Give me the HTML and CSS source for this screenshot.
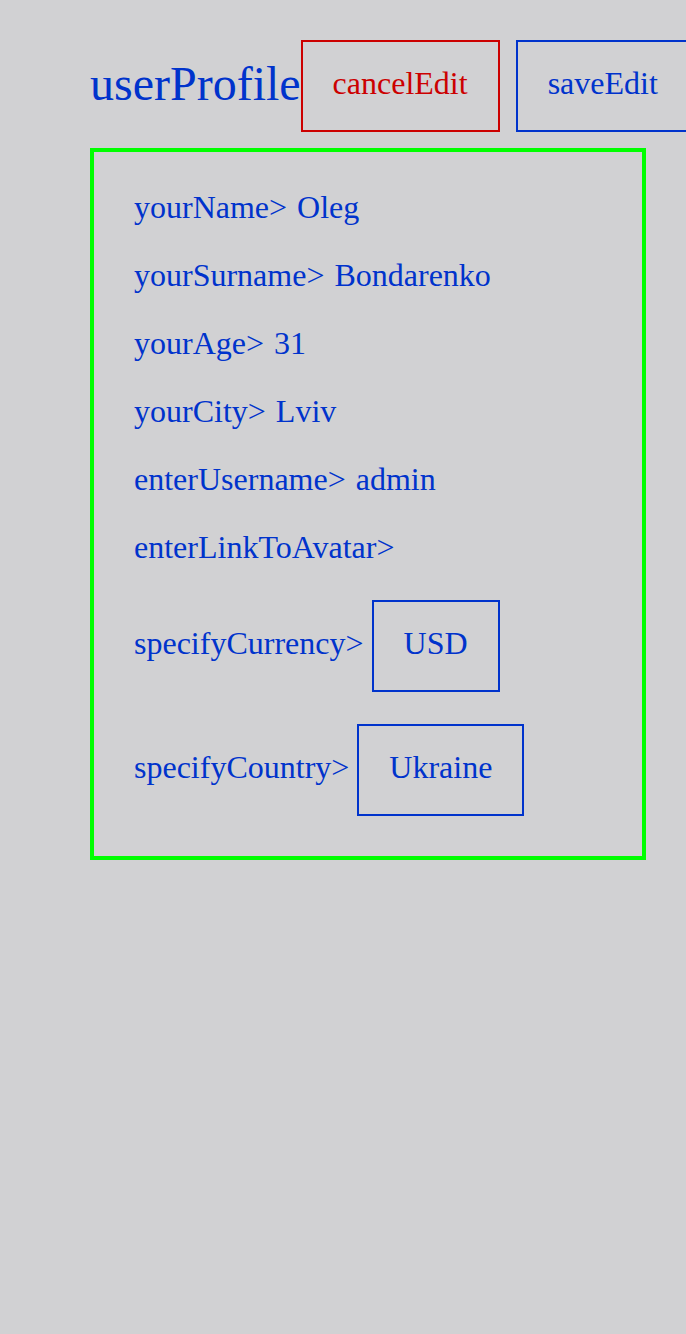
FILE: index.html
```html
<!DOCTYPE html>
<html>
<head>
<meta charset="utf-8">
<title>userProfile</title>
<link rel="stylesheet" href="styles.css">
</head>
<body>
<div class="page">
  <header class="header">
    <h1 class="title">userProfile</h1>
    <button class="btn btn-cancel">cancelEdit</button>
    <button class="btn btn-save">saveEdit</button>
  </header>
  <section class="card">
    <div class="row">yourName&gt;<span class="value">Oleg</span></div>
    <div class="row">yourSurname&gt;<span class="value">Bondarenko</span></div>
    <div class="row">yourAge&gt;<span class="value">31</span></div>
    <div class="row">yourCity&gt;<span class="value">Lviv</span></div>
    <div class="row">enterUsername&gt;<span class="value">admin</span></div>
    <div class="row">enterLinkToAvatar&gt;</div>
    <div class="row-select row-currency">
      <span class="label">specifyCurrency&gt;</span>
      <span class="select">USD</span>
    </div>
    <div class="row-select">
      <span class="label">specifyCountry&gt;</span>
      <span class="select">Ukraine</span>
    </div>
  </section>
</div>
</body>
</html>
```

FILE: styles.css
```css
html, body {
  margin: 0;
  padding: 0;
  overflow-x: hidden;
}
body {
  background: #d1d1d3;
  font-family: "Liberation Serif", "Times New Roman", serif;
  color: #0033cc;
}
.page {
  padding: 40px 0 0 90px;
}
.header {
  display: flex;
  align-items: center;
  white-space: nowrap;
}
.title {
  margin: 0 0 5px;
  font-size: 48px;
  font-weight: normal;
  line-height: 55px;
}
.btn {
  font-family: inherit;
  font-size: 32px;
  line-height: 36px;
  padding: 23px 30px 29px;
  background: transparent;
  border: 2px solid #0033cc;
  color: #0033cc;
  margin: 0;
  flex: none;
}
.btn-cancel {
  border-color: #cc0000;
  color: #cc0000;
}
.btn-save {
  margin-left: 16px;
}
.card {
  margin-top: 16px;
  border: 4px solid #00ff00;
  padding: 37px 0 40px 40px;
  box-sizing: content-box;
  width: 508px;
  display: flex;
  flex-direction: column;
  gap: 32px;
  font-size: 32px;
  line-height: 36px;
}
.row {
  height: 36px;
}
.value {
  margin-left: 10px;
}
.row-select {
  display: flex;
  align-items: baseline;
  gap: 8px;
}
.row-currency {
  margin-top: 3px;
}
.select {
  border: 2px solid #0033cc;
  padding: 23px 30px 29px;
  line-height: 36px;
}
```
